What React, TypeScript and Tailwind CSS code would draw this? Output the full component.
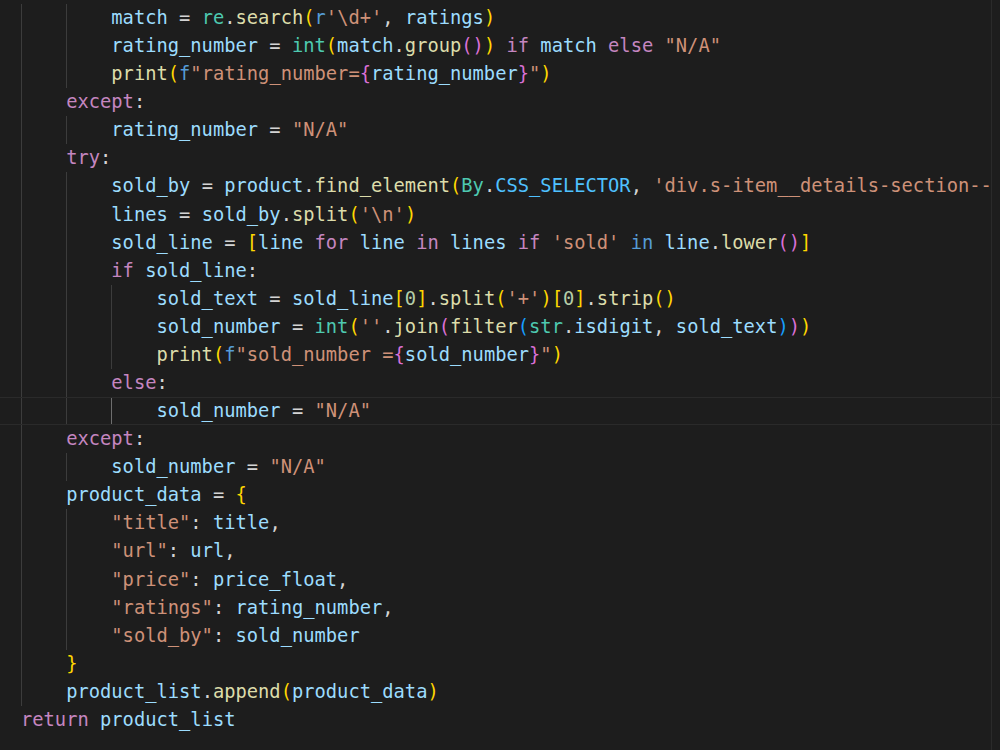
type Tok = [string, string];
type Line = { indent: number; active?: boolean; toks: Tok[] };

const V = "text-[#9cdcfe]";
const K = "text-[#c586c0]";
const F = "text-[#dcdcaa]";
const S = "text-[#ce9178]";
const T = "text-[#4ec9b0]";
const P = "text-[#d4d4d4]";
const B1 = "text-[#ffd700]";
const B2 = "text-[#da70d6]";
const B3 = "text-[#179fff]";
const KB = "text-[#569cd6]";
const N = "text-[#b5cea8]";
const C = "text-[#4fc1ff]";

const lines: Line[] = [
  { indent: 2, toks: [["match", V], [" = ", P], ["re", T], [".", P], ["search", F], ["(", B1], ["r", KB], ["'\\d+'", S], [", ", P], ["ratings", V], [")", B1]] },
  { indent: 2, toks: [["rating_number", V], [" = ", P], ["int", T], ["(", B1], ["match", V], [".", P], ["group", F], ["()", B2], [")", B1], [" if ", K], ["match", V], [" else ", K], ['"N/A"', S]] },
  { indent: 2, toks: [["print", F], ["(", B1], ["f", KB], ['"rating_number=', S], ["{", B2], ["rating_number", V], ["}", B2], ['"', S], [")", B1]] },
  { indent: 1, toks: [["except", K], [":", P]] },
  { indent: 2, toks: [["rating_number", V], [" = ", P], ['"N/A"', S]] },
  { indent: 1, toks: [["try", K], [":", P]] },
  { indent: 2, toks: [["sold_by", V], [" = ", P], ["product", V], [".", P], ["find_element", F], ["(", B1], ["By", T], [".", P], ["CSS_SELECTOR", C], [", ", P], ["'div.s-item__details-section--", S]] },
  { indent: 2, toks: [["lines", V], [" = ", P], ["sold_by", V], [".", P], ["split", F], ["(", B1], ["'\\n'", S], [")", B1]] },
  { indent: 2, toks: [["sold_line", V], [" = ", P], ["[", B1], ["line", V], [" for ", K], ["line", V], [" in ", K], ["lines", V], [" if ", K], ["'sold'", S], [" in ", KB], ["line", V], [".", P], ["lower", F], ["()", B2], ["]", B1]] },
  { indent: 2, toks: [["if", K], [" ", P], ["sold_line", V], [":", P]] },
  { indent: 3, toks: [["sold_text", V], [" = ", P], ["sold_line", V], ["[", B1], ["0", N], ["]", B1], [".", P], ["split", F], ["(", B1], ["'+'", S], [")", B1], ["[", B1], ["0", N], ["]", B1], [".", P], ["strip", F], ["()", B1]] },
  { indent: 3, toks: [["sold_number", V], [" = ", P], ["int", T], ["(", B1], ["''", S], [".", P], ["join", F], ["(", B2], ["filter", F], ["(", B3], ["str", T], [".", P], ["isdigit", V], [", ", P], ["sold_text", V], [")", B3], [")", B2], [")", B1]] },
  { indent: 3, toks: [["print", F], ["(", B1], ["f", KB], ['"sold_number =', S], ["{", B2], ["sold_number", V], ["}", B2], ['"', S], [")", B1]] },
  { indent: 2, toks: [["else", K], [":", P]] },
  { indent: 3, active: true, toks: [["sold_number", V], [" = ", P], ['"N/A"', S]] },
  { indent: 1, toks: [["except", K], [":", P]] },
  { indent: 2, toks: [["sold_number", V], [" = ", P], ['"N/A"', S]] },
  { indent: 1, toks: [["product_data", V], [" = ", P], ["{", B1]] },
  { indent: 2, toks: [['"title"', S], [": ", P], ["title", V], [",", P]] },
  { indent: 2, toks: [['"url"', S], [": ", P], ["url", V], [",", P]] },
  { indent: 2, toks: [['"price"', S], [": ", P], ["price_float", V], [",", P]] },
  { indent: 2, toks: [['"ratings"', S], [": ", P], ["rating_number", V], [",", P]] },
  { indent: 2, toks: [['"sold_by"', S], [": ", P], ["sold_number", V]] },
  { indent: 1, toks: [["}", B1]] },
  { indent: 1, toks: [["product_list", V], [".", P], ["append", F], ["(", B1], ["product_data", V], [")", B1]] },
  { indent: 0, toks: [["return", K], [" ", P], ["product_list", V]] },
];

function CodeLine({ indent, active, toks }: Line) {
  const guides = Array.from({ length: indent }, (_, i) => (
    <span
      key={i}
      className={
        active && i === indent - 1
          ? "shadow-[inset_1px_0_0_#6e6e6e]"
          : "shadow-[inset_1px_0_0_#3c3c3c]"
      }
    >
      {"    "}
    </span>
  ));
  return (
    <div
      className={
        active
          ? "flex h-[28.08px] items-stretch whitespace-pre border-y border-[#2a2a2a] pl-[21px]"
          : "flex h-[28.08px] items-stretch whitespace-pre pl-[21px]"
      }
    >
      {guides}
      <span className="flex items-center">
        {toks.map(([t, c], i) => (
          <span key={i} className={c}>
            {t}
          </span>
        ))}
      </span>
    </div>
  );
}

export default function App() {
  return (
    <div className="relative h-[750px] w-[1000px] overflow-hidden bg-[#1d1d1d] font-['DejaVu_Sans_Mono',monospace] text-[18.75px]">
      <div className="pt-[4px]">
        {lines.map((l, i) => (
          <CodeLine key={i} {...l} />
        ))}
      </div>
      {/* scrollbar edge over the code */}
      <div className="absolute right-0 top-0 h-full w-[9px] border-l border-[#2a2a2a]" />
    </div>
  );
}
